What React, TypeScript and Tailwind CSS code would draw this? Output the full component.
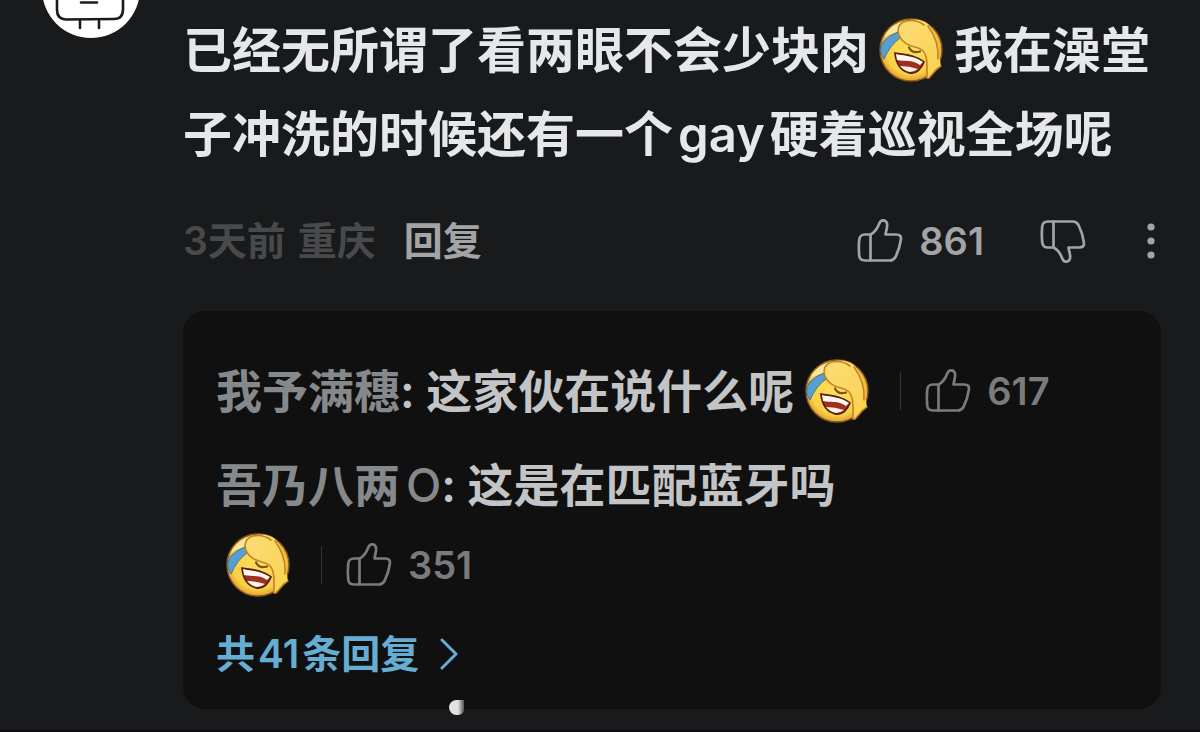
import React from "react";

function LaughCryEmoji({ className = "" }: { className?: string }) {
  return (
    <svg viewBox="0 0 66 66" role="img" aria-label="笑哭" className={`inline-block size-[66px] shrink-0 ${className}`}>
      <defs>
        <radialGradient id="face" cx="0.5" cy="0.48" r="0.55">
          <stop offset="0" stopColor="#fde05a" />
          <stop offset="0.75" stopColor="#fad048" />
          <stop offset="1" stopColor="#d9962a" />
        </radialGradient>
        <linearGradient id="hand" x1="0" y1="0" x2="0.8" y2="1">
          <stop offset="0" stopColor="#fbdc78" />
          <stop offset="1" stopColor="#fbd350" />
        </linearGradient>
      </defs>
      <circle cx="33" cy="33" r="31" fill="url(#face)" stroke="#8a5a18" strokeWidth="1.400" />
      <path d="M6 21 C9 13 15 8 23 5 L20 15 Q12 16 6 21Z" fill="#fbe6a0" />
      <path d="M5 25 Q11 18 20 15 L22 21 Q12 28 6 42 Q0 34 5 25Z" fill="#559fd3" stroke="#4f7488" strokeWidth="1" />
      <path
        d="M24 5 C34 1 44 2 50 7 C56 14 61 26 61 38 L63 49 L58 52 L50 62 C47 60 49 54 49 50 L48 38 C46 31 37 34 29 28 C20 22 17 11 24 5Z"
        fill="url(#hand)"
      />
      <path
        d="M46 8 Q38 2 28 4 C18 7 18 17 25 24 C32 31 39 29 44 33 C50 38 49 48 49 61 M51 61 L58 53 L63 49 M50 9 C56 17 61 29 60 42"
        fill="none"
        stroke="#c18226"
        strokeWidth="1.600"
        strokeLinecap="round"
        strokeLinejoin="round"
      />
      <path d="M31 30.500 Q34 37 42 34.500" fill="none" stroke="#80501a" strokeWidth="2.200" strokeLinecap="round" />
      <path d="M17 36 C25 38 36 37 46 45 C43 52 38 57 32 56 C22 54 18 46 17 36Z" fill="#a12f20" stroke="#4f2110" strokeWidth="1.800" strokeLinejoin="round" />
      <path d="M18 37 C25 39 35 38 45 45 L42 48 C34 42 27 45 19 43Z" fill="#fff8ef" />
      <path d="M22 49 Q31 49 40 52 Q36 55 32 55 Q26 54 22 49Z" fill="#fff1e6" />
    </svg>
  );
}

function ThumbIcon({ down = false }: { down?: boolean }) {
  return (
    <svg
      viewBox="0 0 46 46"
      aria-hidden="true"
      className={`size-[46px] shrink-0 ${down ? "-scale-y-100" : ""}`}
      fill="none"
      stroke="currentColor"
      strokeWidth="2.700"
      strokeLinejoin="round"
      strokeLinecap="round"
    >
      <path d="M13.500 16.500 C19 14 21 9 22.500 5 C24 1.200 29 1.500 30 5.500 C30.800 9 29 12.500 28.500 16.500 L39 16.500 C43 16.500 44.500 18 43.800 22 C42.800 29 40.500 35 38.500 39 C37 41.500 35.500 42.500 33 42.500 L8 42.500 C4 42.500 2.500 41 2.200 37.500 C1.700 32 1.700 27 2.200 22 C2.600 18 4 16.500 8 16.500 Z" />
      <path d="M13.500 16.500 V42.500" />
    </svg>
  );
}

function LikeButton({ count, label }: { count: number; label: string }) {
  return (
    <button type="button" aria-label={label} className="inline-flex items-center gap-4 text-[38px]">
      <ThumbIcon />
      <span>{count}</span>
    </button>
  );
}

function InlineLike({ count }: { count: number }) {
  return (
    <span className="inline-flex items-center leading-[66px] text-[#7b7b7d]">
      <LaughCryEmoji />
      <span className="mr-[24px] ml-[30px] h-[38px] w-px bg-[#363636]" />
      <LikeButton count={count} label={`点赞 ${count}`} />
    </span>
  );
}

function Avatar() {
  return (
    <svg viewBox="0 0 98 98" role="img" aria-label="头像" className="-mt-[60px] size-[98px] shrink-0">
      <circle cx="49" cy="49" r="49" fill="#fff" />
      <g fill="none" stroke="#1b1b1d" strokeWidth="2.600" strokeLinecap="round">
        <path d="M15 40 V70 Q15 79 24 79.500 L72 79 Q81 79 81 69 V40 Q81 34 73 34 H23 Q15 34 15 40Z" />
        <path d="M39 62.500 H55 M38 81 V88 M57 81 V88" />
      </g>
    </svg>
  );
}

export default function App() {
  return (
    <main className="flex min-h-screen items-start border-b-2 border-[#0c0b10] bg-[#191a1c] pl-[42px] pr-[39px] font-['Inter','Noto_Sans_CJK_SC',sans-serif] font-semibold">
      <Avatar />
      <article className="ml-[43px] min-w-0 flex-1 pt-[9px]">
        <p className="text-[49px] leading-[84px] text-[#e6e7e8]">
          已经无所谓了看两眼不会少块肉
          <LaughCryEmoji className="mr-[10px] ml-[9px] -mt-[10px] align-middle" />
          我在澡堂
          <wbr />
          子冲洗的时候还有一个<span className="mx-[5px]">gay</span>硬着巡视全场呢
        </p>

        <div className="mt-[36px] flex items-center pr-[6px] text-[39px] leading-[56px] text-[#a3a4a7]">
          <span className="flex gap-[12px] text-[#48494b]">
            <span>3天前</span>
            <span>重庆</span>
          </span>
          <button type="button" className="ml-[28px]">回复</button>
          <div className="ml-auto flex items-center">
            <LikeButton count={861} label="点赞 861" />
            <button type="button" aria-label="点踩" className="ml-[56px] flex">
              <ThumbIcon down />
            </button>
            <button type="button" aria-label="更多" className="ml-[61px] flex">
              <svg viewBox="0 0 8 36" className="h-9 w-2" fill="currentColor" aria-hidden="true">
                <circle cx="4" cy="4" r="3.600" />
                <circle cx="4" cy="18" r="3.600" />
                <circle cx="4" cy="32" r="3.600" />
              </svg>
            </button>
          </div>
        </div>

        <section className="relative mt-[42px] rounded-[22px] bg-[#101010] px-[33px] pt-[40px] pb-[20px] text-[46px] leading-[80px] text-[#c3c4c5]">
          <div className="flex h-20 items-center gap-[10px]">
            <p>
              <a href="#user-1" className="text-[#85898c]">我予满穗</a>: 这家伙在说什么呢
            </p>
            <InlineLike count={617} />
          </div>
          <p className="mt-[14px]">
            <a href="#user-2" className="text-[#85898c]">吾乃八两<span className="ml-[6px] font-medium">O</span></a>: 这是在匹配蓝牙吗
          </p>
          <div className="flex h-20 items-center pl-[9px]">
            <InlineLike count={351} />
          </div>
          <a href="#replies" className="mt-[14px] flex items-center gap-[20px] text-[39px] leading-[70px] text-[#65add3]">
            <span>共<span className="mx-[3px]">41</span>条回复</span>
            <svg viewBox="0 0 20 32" className="h-8 w-5" fill="none" stroke="currentColor" strokeWidth="3" strokeLinecap="round" strokeLinejoin="round" aria-hidden="true">
              <path d="M3 2 L17 16 L3 30" />
            </svg>
          </a>
          <span className="absolute -bottom-[6px] left-[266px] h-[15px] w-[15px] rounded-l-[8px] rounded-br-[6px] bg-linear-to-r from-[#e2e2e2] from-60% to-[#555]" />
        </section>
      </article>
    </main>
  );
}
